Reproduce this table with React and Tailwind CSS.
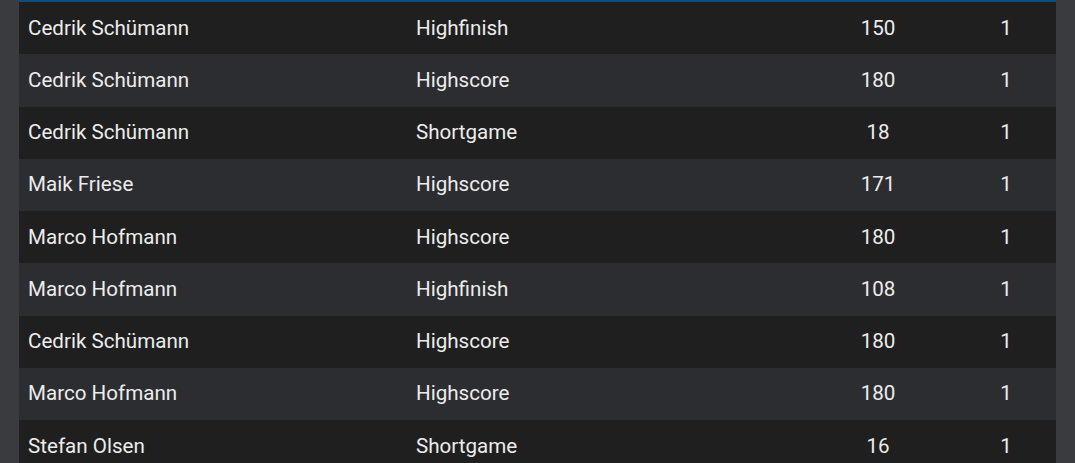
export default function App() {
  const rows = [
    ["Cedrik Schümann", "Highfinish", "150", "1"],
    ["Cedrik Schümann", "Highscore", "180", "1"],
    ["Cedrik Schümann", "Shortgame", "18", "1"],
    ["Maik Friese", "Highscore", "171", "1"],
    ["Marco Hofmann", "Highscore", "180", "1"],
    ["Marco Hofmann", "Highfinish", "108", "1"],
    ["Cedrik Schümann", "Highscore", "180", "1"],
    ["Marco Hofmann", "Highscore", "180", "1"],
    ["Stefan Olsen", "Shortgame", "16", "1"],
  ];
  return (
    <div className="w-[1075px] h-[463px] overflow-hidden bg-[#3a3b3f] px-[19px]" style={{ fontFamily: "Roboto, sans-serif" }}>
      <div className="h-[2px] bg-[#0b4d7e]" />
      {rows.map((r, i) => (
        <div
          key={i}
          className={`grid grid-cols-[388px_393px_156px_100px] h-[52.25px] items-center text-[20.6px] text-[#ececec] ${i % 2 === 0 ? "bg-[#1f1f1f]" : "bg-[#2c2d31]"}`}
        >
          <div className="pl-[9px]">{r[0]}</div>
          <div className="pl-[9px]">{r[1]}</div>
          <div className="text-center">{r[2]}</div>
          <div className="text-center">{r[3]}</div>
        </div>
      ))}
    </div>
  );
}
